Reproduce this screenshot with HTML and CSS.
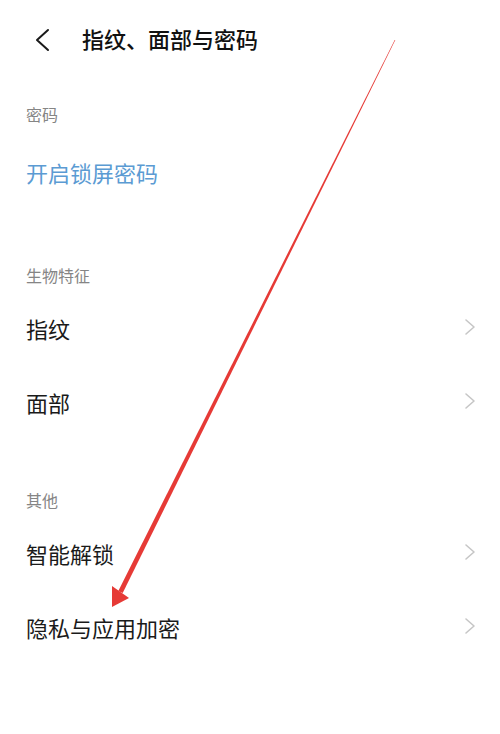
FILE: index.html
```html
<!DOCTYPE html>
<html lang="zh-CN">
<head>
<meta charset="utf-8">
<title>指纹、面部与密码</title>
<link rel="stylesheet" href="styles.css">
</head>
<body>
<div class="screen">
  <header class="topbar">
    <svg class="back" width="16" height="24" viewBox="0 0 16 24"><path d="M14 2 L3 12 L14 22" fill="none" stroke="#1a1a1a" stroke-width="2" stroke-linecap="round" stroke-linejoin="round"/></svg>
    <h1 class="title">指纹、面部与密码</h1>
  </header>

  <section class="group first">
    <div class="group-title">密码</div>
    <div class="item link">开启锁屏密码</div>
  </section>

  <section class="group">
    <div class="group-title">生物特征</div>
    <div class="item"><span>指纹</span><svg class="chev" width="12" height="18" viewBox="0 0 12 18"><path d="M2 2 L10 9 L2 16" fill="none" stroke="#c6c6c6" stroke-width="1.6" stroke-linecap="round" stroke-linejoin="round"/></svg></div>
    <div class="item"><span>面部</span><svg class="chev" width="12" height="18" viewBox="0 0 12 18"><path d="M2 2 L10 9 L2 16" fill="none" stroke="#c6c6c6" stroke-width="1.6" stroke-linecap="round" stroke-linejoin="round"/></svg></div>
  </section>

  <section class="group">
    <div class="group-title">其他</div>
    <div class="item"><span>智能解锁</span><svg class="chev" width="12" height="18" viewBox="0 0 12 18"><path d="M2 2 L10 9 L2 16" fill="none" stroke="#c6c6c6" stroke-width="1.6" stroke-linecap="round" stroke-linejoin="round"/></svg></div>
    <div class="item"><span>隐私与应用加密</span><svg class="chev" width="12" height="18" viewBox="0 0 12 18"><path d="M2 2 L10 9 L2 16" fill="none" stroke="#c6c6c6" stroke-width="1.6" stroke-linecap="round" stroke-linejoin="round"/></svg></div>
  </section>

  <svg class="annotation" width="500" height="734" viewBox="0 0 500 734">
    <polygon points="395.3,40.1 394.7,39.9 118.3,590.9 122.7,593.1" fill="#e63a36"/>
    <polygon points="112,607 112,586 129,598" fill="#e63a36"/>
  </svg>
</div>
</body>
</html>
```

FILE: styles.css
```css
html, body {
  margin: 0;
  padding: 0;
  background: #ffffff;
}
body {
  font-family: "Noto Sans CJK SC", "Noto Sans", sans-serif;
  color: #1a1a1a;
}
.screen {
  position: relative;
  width: 500px;
  height: 734px;
  overflow: hidden;
  background: #fff;
}
.topbar {
  height: 76px;
  display: flex;
  align-items: center;
  padding-left: 34px;
}
.back {
  display: block;
  margin-top: 4px;
}
.title {
  margin: 0 0 0 32px;
  font-size: 22px;
  font-weight: 500;
  line-height: 1;
  color: #111;
}
.group {
  margin-top: 45px;
  padding: 0 25px 0 26px;
}
.group.first {
  margin-top: 22px;
}
.group-title {
  height: 32px;
  display: flex;
  align-items: center;
  font-size: 16px;
  color: #858585;
}
.item {
  height: 74px;
  display: flex;
  align-items: center;
  justify-content: space-between;
  font-size: 22px;
  color: #1a1a1a;
}
.item.link {
  height: 84px;
  color: #5b9bd3;
}
.chev {
  display: block;
  margin-right: -1px;
  margin-top: -2px;
}
.annotation {
  position: absolute;
  left: 0;
  top: 0;
  pointer-events: none;
}
```
